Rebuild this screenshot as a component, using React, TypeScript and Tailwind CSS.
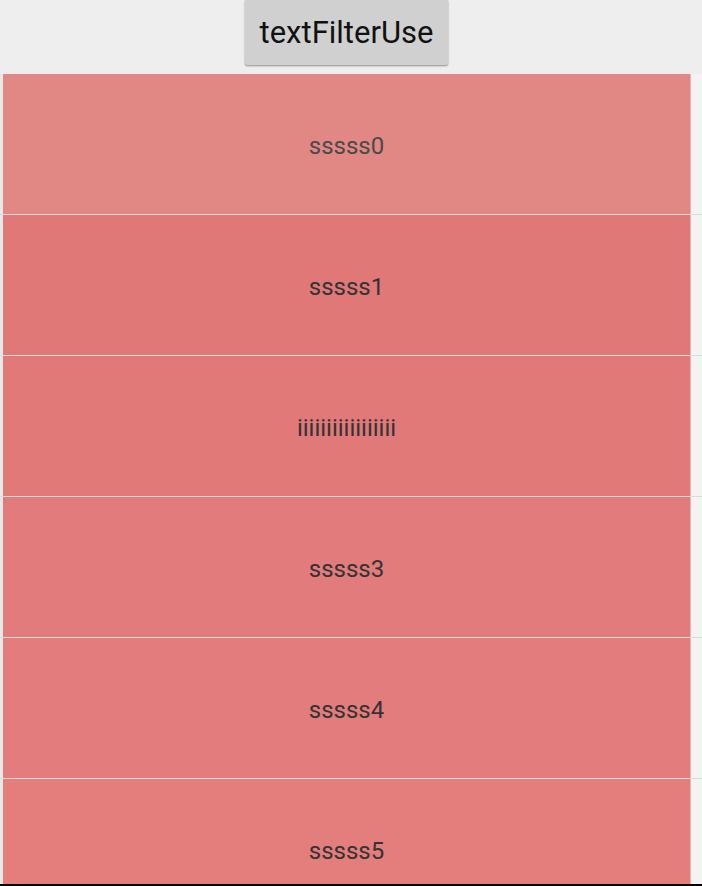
import React from "react";

const rows = [
  { label: "sssss0", bg: "bg-[#e18784]", text: "text-[#4a4a4a]" },
  { label: "sssss1", bg: "bg-[#e07878]", text: "text-[#333333]" },
  { label: "iiiiiiiiiiiiiiiii", bg: "bg-[#e17979]", text: "text-[#333333]" },
  { label: "sssss3", bg: "bg-[#e27b7b]", text: "text-[#333333]" },
  { label: "sssss4", bg: "bg-[#e37d7d]", text: "text-[#333333]" },
  { label: "sssss5", bg: "bg-[#e47e7d]", text: "text-[#333333]" },
];

export default function App() {
  return (
    <div
      className="w-[702px] h-[886px] bg-[#eeeeee] overflow-hidden flex flex-col"
      style={{ fontFamily: "Roboto, 'Noto Sans', sans-serif" }}
    >
      <div className="h-[74px] shrink-0 flex justify-center pr-[9px]">
        <div className="w-[203px] h-[65px] bg-[#d0d0d0] rounded-b-[2px] shadow-[0_1px_2px_rgba(0,0,0,0.4)] flex items-center justify-center text-[31px] text-[#111111] leading-none pb-[1px]">
          textFilterUse
        </div>
      </div>
      <div className="flex-1 overflow-hidden flex flex-col">
        {rows.map((r, i) => (
          <div key={i} className="flex flex-col shrink-0">
            <div className="flex">
              <div className="w-[3px] shrink-0 bg-[#e8e8e8]" />
              <div
                className={`w-[688px] h-[140px] shrink-0 ${r.bg} border-r border-r-[#f0b0b0] flex items-center justify-center pt-[3px] text-[24px] ${r.text}`}
              >
                {r.label}
              </div>
              <div className="flex-1 bg-[#f3f3f3]" />
            </div>
            <div className="h-px w-full bg-[#dadada]" />
          </div>
        ))}
      </div>
      <div className="h-[2px] shrink-0 bg-black" />
    </div>
  );
}
